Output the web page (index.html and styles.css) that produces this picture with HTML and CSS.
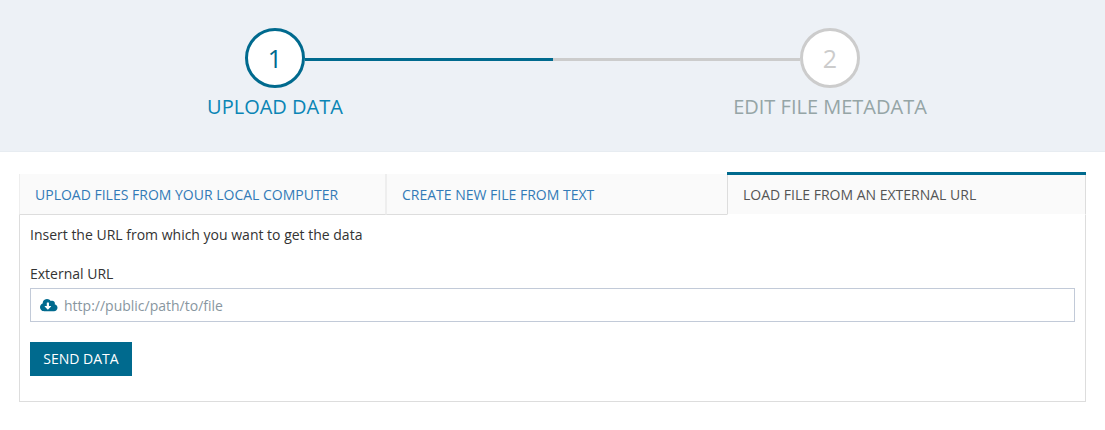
FILE: index.html
```html
<!DOCTYPE html>
<html lang="en">
<head>
<meta charset="utf-8">
<title>Upload data</title>
<link rel="stylesheet" href="styles.css">
</head>
<body>
<header class="wizard">
  <ol class="steps">
    <li class="step step-active"><div class="track"><i class="line blank"></i><span class="circle">1</span><i class="line"></i></div><div class="step-title">UPLOAD DATA</div></li>
    <li class="step"><div class="track"><i class="line"></i><span class="circle">2</span><i class="line blank"></i></div><div class="step-title">EDIT FILE METADATA</div></li>
  </ol>
</header>
<main class="content">
  <nav class="tabs">
    <a class="tab tab-files">UPLOAD FILES FROM YOUR LOCAL COMPUTER</a>
    <a class="tab tab-text">CREATE NEW FILE FROM TEXT</a>
    <a class="tab tab-current">LOAD FILE FROM AN EXTERNAL URL</a>
  </nav>
  <section class="panel">
    <p class="intro">Insert the URL from which you want to get the data</p>
    <label class="label" for="url">External URL</label>
    <div class="field">
      <svg class="cloud" viewBox="0 0 640 512"><path fill="#006a8e" d="M537.6 226.6c4.100-10.700 6.400-22.400 6.400-34.600 0-53-43-96-96-96-19.700 0-38.100 6-53.300 16.200C367 64.200 315.300 32 256 32c-88.400 0-160 71.600-160 160 0 2.700.1 5.400.2 8.100C40.200 219.800 0 273.200 0 336c0 79.500 64.500 144 144 144h368c70.700 0 128-57.300 128-128 0-61.900-44-113.600-102.400-125.400zm-132.900 88.700L299.300 420.700c-6.200 6.200-16.400 6.200-22.600 0L171.300 315.300c-10.100-10.100-2.900-27.300 11.300-27.300H248V176c0-8.800 7.200-16 16-16h48c8.800 0 16 7.200 16 16v112h65.400c14.200 0 21.400 17.200 11.300 27.300z"/></svg>
      <input class="input" id="url" type="text" placeholder="http://public/path/to/file">
    </div>
    <button class="send">SEND DATA</button>
  </section>
</main>
</body>
</html>
```
FILE: styles.css
```css
* { box-sizing: border-box; }
body { margin: 0; background: #fff; color: #333; font: 14px/20px "Open Sans", sans-serif; overflow: hidden; }
.wizard { height: 152px; background: #edf1f6; border-bottom: 1px solid #e7ecf1; padding-top: 28px; overflow: hidden; }
.steps { display: flex; width: 1110px; margin: 0 0 0 -2.5px; padding: 0; list-style: none; }
.step { width: 555px; color: #95a5a6; text-align: center; }
.track { display: flex; align-items: center; height: 60px; }
.line { flex: 1; height: 3px; margin-top: 2px; background: #ccc; }
.circle { width: 60px; height: 60px; border: 3px solid #ccc; border-radius: 50%; background: #fff; color: #ccc; font-size: 25px; line-height: 55px; }
.step-title { margin-top: 5px; font-size: 20px; line-height: 28px; }
.step-active { color: #0a85b5; }
.step-active .line { background: #006a8e; }
.step-active .circle { border-color: #006a8e; color: #006a8e; }
.track .blank { background: transparent; }
.content { padding: 20px 19px 0; }
.tabs { display: flex; height: 43px; padding-top: 2px; }
.tab { height: 41px; padding: 11px 15px 9px; background: #fafafa; border-bottom: 1px solid #ddd; border-left: 1px solid #eee; color: #337ab7; white-space: nowrap; }
.tab-files { width: 367px; border-right: 1px solid #eee; }
.tab-text { width: 341px; }
.tab-current { flex: 1; height: 40px; margin-top: 1px; padding-top: 10px; border-left-color: #ddd; border-right: 1px solid #ddd; border-bottom-color: #fff; box-shadow: 0 -3px 0 #006a8e; color: #555; }
.panel { height: 187px; border: 1px solid #ddd; border-top: 0; padding: 10px 10px 0; }
.intro { margin: 0 0 19px; }
.label { display: block; }
.field { display: flex; align-items: center; height: 34px; margin-top: 4px; padding-left: 9px; border: 1px solid #c2cad8; }
.cloud { width: 17.5px; height: 14px; }
.input { flex: 1; height: 32px; margin-left: 6.5px; padding: 0; border: 0; outline: 0; background: transparent; font: inherit; }
.input::placeholder { color: #8896a0; opacity: 1; }
.send { display: block; width: 102px; height: 34px; margin-top: 20px; padding: 0; border: 0; background: #006a8e; color: #fff; font: inherit; }
```
